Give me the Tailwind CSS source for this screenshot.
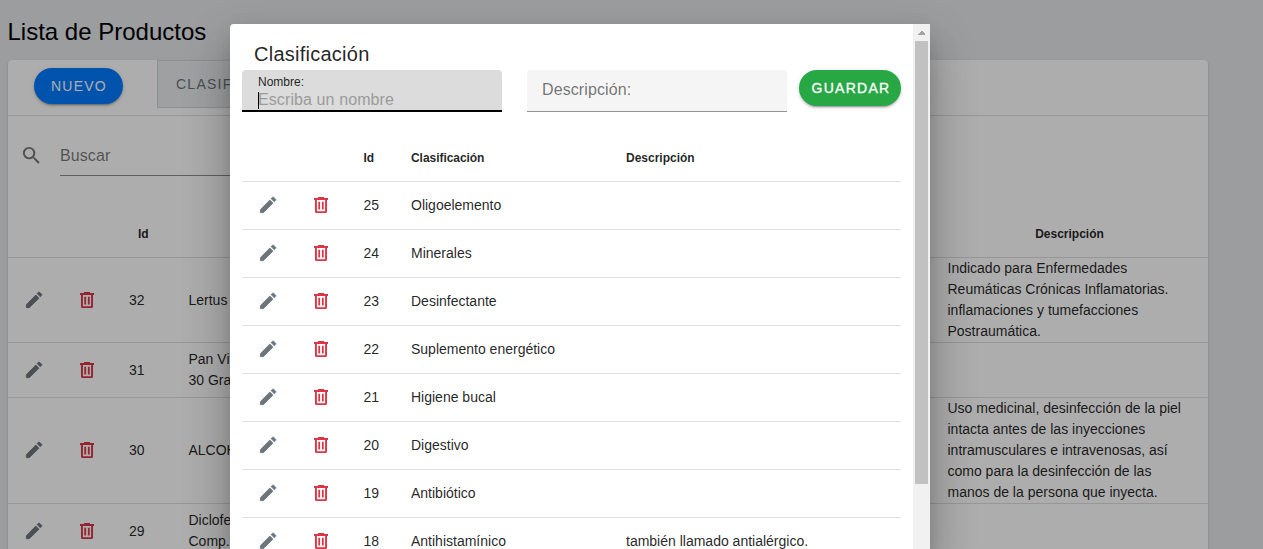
<!DOCTYPE html>
<html lang="es">
<head>
<meta charset="utf-8">
<title>Lista de Productos</title>
<script src="https://cdn.jsdelivr.net/npm/@tailwindcss/browser@4"></script>
</head>
<body class="relative h-[549px] w-[1263px] overflow-hidden bg-[#e5e7ea] font-['Liberation_Sans',Arial,sans-serif] text-black/87">
<svg class="hidden">
  <symbol id="pencil" viewBox="0 0 21 21"><path transform="translate(.33 -.67) scale(.889)" fill="currentColor" stroke="currentColor" stroke-width=".9" stroke-linejoin="round" d="M20.6,7.04C21,6.65 21,6 20.6,5.63L18.37,3.4C18,3 17.35,3 16.96,3.4L15.5,4.8L19.2,8.5M3.4,17.25V20.6H6.75L17.6,9.93L14.06,6.4Z"/></symbol>
  <symbol id="trash" viewBox="0 0 21 21"><path fill="currentColor" fill-rule="evenodd" d="M8 2H14V3H18V5H17V16.4Q17 18 15.4 18H6.6Q5 18 5 16.4V5H4V3H8ZM6.9 5V16.2H15.1V5ZM8.3 6.7H10.1V14.4H8.3ZM11.9 6.7H13.7V14.4H11.9Z"/></symbol>
</svg>

<main class="px-2">
  <h1 class="-ml-[0.5px] flex h-[60px] items-center pt-[3px] text-2xl text-black">Lista de Productos</h1>
  <section class="h-[489px] w-[1200px] rounded-t bg-white shadow-[0_2px_1px_-1px_rgba(0,0,0,.2),0_1px_1px_0_rgba(0,0,0,.14),0_1px_3px_0_rgba(0,0,0,.12)]">
    <div class="flex h-14 items-start border-b border-[#dfdfdf]">
      <button class="mt-2 ml-[26px] h-9 w-[89px] rounded-full bg-[#007bff] pl-px text-sm tracking-[1.25px] text-white shadow-[0_3px_1px_-2px_rgba(0,0,0,.2),0_2px_2px_0_rgba(0,0,0,.14),0_1px_5px_0_rgba(0,0,0,.12)]">NUEVO</button>
      <button class="ml-[34px] h-12 w-[160px] border border-[#d3d5d8] bg-[#ebecee] pl-[18px] text-left text-sm tracking-[1.25px] text-[#6c757d]">CLASIFICACIÓN</button>
    </div>
    <div class="flex h-[94px] pt-4 pl-3">
      <svg class="mt-3 size-[23px] text-[#757575]" viewBox="0 0 24 24"><path fill="currentColor" d="M15.5 14h-.79l-.28-.27A6.471 6.471 0 0 0 16 9.5 6.5 6.5 0 1 0 9.5 16c1.61 0 3.09-.59 4.23-1.57l.27.28v.79l5 4.99L20.49 19l-4.99-5zm-6 0C7.01 14 5 11.99 5 9.5S7.01 5 9.5 5 14 7.01 14 9.5 11.99 14 9.5 14z"/></svg>
      <label class="ml-[17px] flex h-11 w-[400px] items-center border-b border-[#8e8e8e] pt-1 text-base tracking-[0.1px] text-black/55">Buscar</label>
    </div>
    <div id="products" class="h-[339px] overflow-hidden text-sm leading-[21px]">
      <div class="flex h-12 items-center border-b border-[#dfdfdf] text-xs font-bold">
        <span class="w-[925px] pl-[130px]">Id</span><span class="w-[273px] text-center">Descripción</span>
      </div>
    </div>
  </section>
</main>

<div class="absolute inset-0 bg-black/32"></div>

<div class="absolute top-6 left-[230px] flex h-[525px] w-[700px] overflow-hidden rounded-tl bg-white shadow-[0_11px_15px_-7px_rgba(0,0,0,.2),0_34px_38px_3px_rgba(0,0,0,.14),0_19px_46px_8px_rgba(0,0,0,.12),0_0_20px_0_rgba(0,0,0,.04)]">
  <div class="w-[683px] pl-3">
    <h2 class="flex h-[46px] items-center pt-[14px] pl-3 text-xl tracking-[0.25px]">Clasificación</h2>
    <div class="flex h-[63px] items-start">
      <div class="h-[42px] w-[260px] rounded-t border-b-2 border-black bg-[#dcdcdc] pt-[5px] pl-4">
        <div class="text-xs leading-[14px]">Nombre:</div>
        <div class="relative pt-px text-base leading-5 tracking-[0.1px] text-[#9b9b9b]"><span class="absolute top-[3px] left-0 h-[17px] w-px bg-black"></span>Escriba un nombre</div>
      </div>
      <div class="ml-[25px] flex h-[42px] w-[260px] items-center rounded-t border-b border-[#949494] bg-[#f5f5f5] pb-[2px] pl-[15px] text-base tracking-[0.1px] text-black/55">Descripción:</div>
      <button class="ml-3 h-9 w-[102px] rounded-full bg-[#28a745] pl-[2px] text-sm tracking-[1.25px] text-white shadow-[0_3px_1px_-2px_rgba(0,0,0,.2),0_2px_2px_0_rgba(0,0,0,.14),0_1px_5px_0_rgba(0,0,0,.12)] [-webkit-text-stroke:0.3px_white]">GUARDAR</button>
    </div>
    <div id="classes" class="h-[416px] w-[659px] overflow-hidden text-sm">
      <div class="flex h-[49px] items-center border-b border-[#dfdfdf] pt-[2px] text-xs font-bold">
        <span class="w-[169px] pl-[121.5px]">Id</span><span class="w-[215px] tracking-[-0.05px]">Clasificación</span><span>Descripción</span>
      </div>
    </div>
  </div>
  <div class="flex w-[17px] flex-col items-center bg-[#f1f1f1]">
    <svg class="size-[17px]" viewBox="0 0 17 17" shape-rendering="crispEdges"><path fill="#a3a3a3" d="M5 11V10L8 7h1l3 3v1z"/></svg>
    <div class="h-[443px] w-[13px] bg-[#c1c1c1]"></div>
  </div>
</div>

<script>
const pencil = '<svg class="size-[21px] shrink-0 text-[#6c757d]"><use href="#pencil"/></svg>';
const trash = '<svg class="ml-8 size-[21px] shrink-0 text-[#dc3545]"><use href="#trash"/></svg>';
[
  [85, 32, 'Lertus', 'Indicado para Enfermedades<br>Reumáticas Crónicas Inflamatorias.<br>inflamaciones y tumefacciones<br>Postraumática.'],
  [55, 31, 'Pan Vitamínico<br>30 Grageas', ''],
  [106, 30, 'ALCOHOL', 'Uso medicinal, desinfección de la piel<br>intacta antes de las inyecciones<br>intramusculares e intravenosas, así<br>como para la desinfección de las<br>manos de la persona que inyecta.'],
  [55, 29, 'Diclofenaco<br>Comp.', '']
].forEach(([h, id, name, desc]) => document.getElementById('products').insertAdjacentHTML('beforeend',
  `<div class="flex items-center border-b border-[#dfdfdf] pl-[15px]" style="height:${h}px">${pencil}${trash}<span class="ml-8 w-[59.5px]">${id}</span><span class="w-[759px]">${name}</span><span>${desc}</span></div>`));
[
  [25, 'Oligoelemento', ''], [24, 'Minerales', ''], [23, 'Desinfectante', ''], [22, 'Suplemento energético', ''],
  [21, 'Higiene bucal', ''], [20, 'Digestivo', ''], [19, 'Antibiótico', ''], [18, 'Antihistamínico', 'también llamado antialérgico.']
].forEach(([id, name, desc]) => document.getElementById('classes').insertAdjacentHTML('beforeend',
  `<div class="flex h-12 items-center border-b border-[#dfdfdf] pb-px pl-[15px]">${pencil}${trash}<span class="ml-[32.5px] w-[47.5px]">${id}</span><span class="w-[215px]">${name}</span><span>${desc}</span></div>`));
</script>
</body>
</html>
